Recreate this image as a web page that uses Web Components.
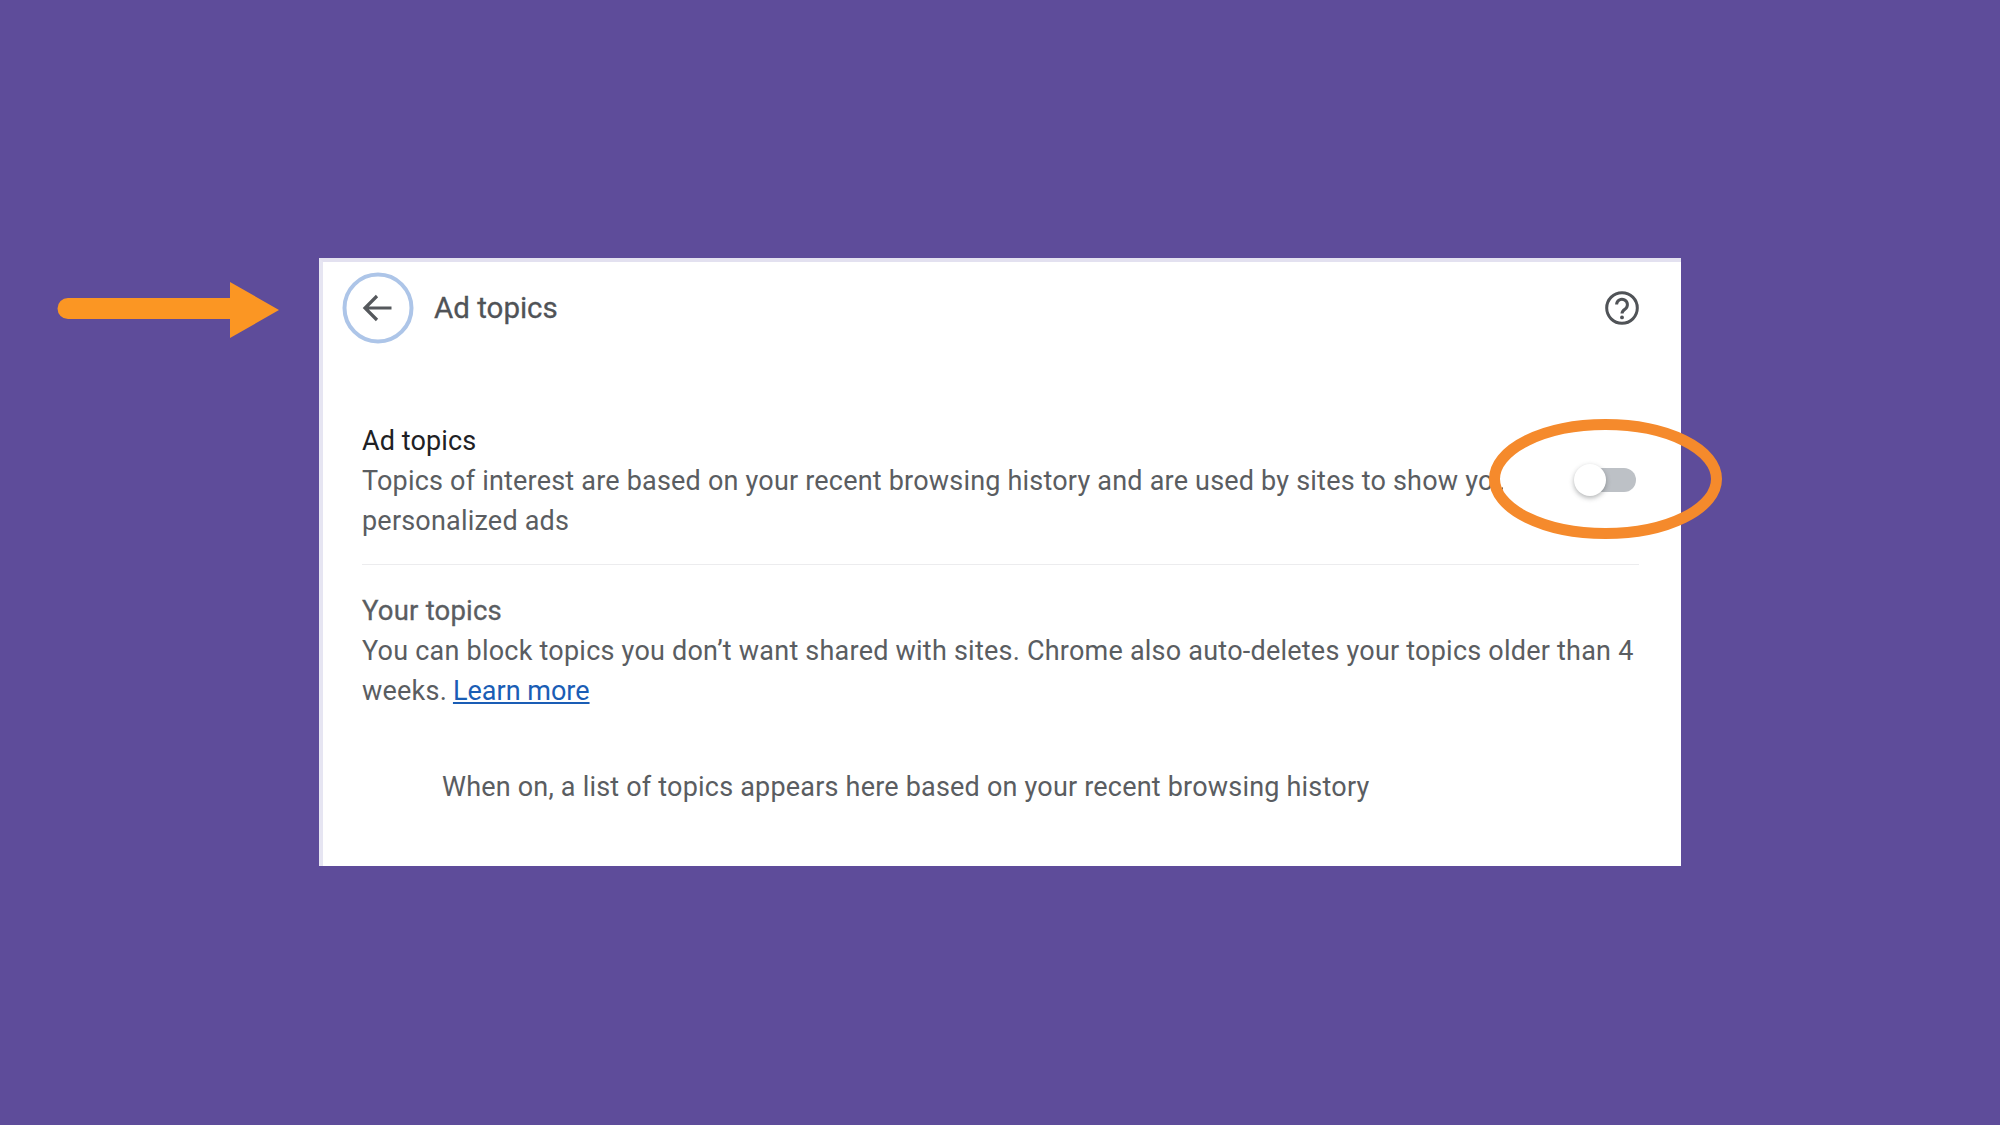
<!DOCTYPE html>
<html lang="en">
<head>
<meta charset="utf-8">
<title>Ad topics</title>
<style>
  html, body { margin: 0; height: 100%; }
  body {
    width: 2000px;
    height: 1125px;
    background: #5e4c9a;
    font-family: Roboto, "Liberation Sans", sans-serif;
    overflow: hidden;
    position: relative;
    display: flex;
    padding: 258px 0 0 319px;
    box-sizing: border-box;
  }
  a-arrow { position: absolute; left: 57px; top: 282px; }
  a-ring { position: absolute; left: 1489px; top: 419px; }
</style>
</head>
<body>
  <topics-card>
    <topics-header slot="header">Ad topics</topics-header>
    <setting-row>
      <span slot="title">Ad topics</span>
      Topics of interest are based on your recent browsing history and are used by sites to show you personalized ads
    </setting-row>
    <topics-section>
      <span slot="title">Your topics</span>
      You can block topics you don’t want shared with sites. Chrome also auto-deletes your topics older than 4 weeks. <a href="#">Learn more</a>
      <span slot="empty">When on, a list of topics appears here based on your recent browsing history</span>
    </topics-section>
  </topics-card>
  <a-arrow></a-arrow>
  <a-ring></a-ring>
<script>
class TopicsCard extends HTMLElement {
  constructor() {
    super();
    this.attachShadow({ mode: "open" }).innerHTML = `
      <style>
        :host {
          display: flex;
          flex-direction: column;
          width: 1362px;
          height: 608px;
          box-sizing: border-box;
          background: #fff;
          border-top: 4px solid #e3e1f0;
          border-left: 4px solid #e6e5f2;
        }
      </style>
      <slot name="header"></slot>
      <slot></slot>`;
  }
}

class TopicsHeader extends HTMLElement {
  constructor() {
    super();
    this.attachShadow({ mode: "open" }).innerHTML = `
      <style>
        :host {
          display: flex;
          align-items: center;
          height: 92px;
          padding: 0 42px 0 19px;
          color: #505357;
          font-size: 29.500px;
          font-weight: 400;
          -webkit-text-stroke: 0.3px #505357;
        }
        .back {
          width: 72px;
          height: 72px;
          margin-right: 20px;
          flex: none;
        }
        .title { flex: 1; }
        .help { width: 34px; height: 34px; flex: none; }
      </style>
      <svg class="back" viewBox="0 0 72 72" fill="none">
        <circle cx="36" cy="36" r="33.500" stroke="#adc5e8" stroke-width="4"/>
        <path d="M49.500 36H23.500M35 24L23 36L35 48" stroke="#55585c" stroke-width="3.200"/>
      </svg>
      <span class="title"><slot></slot></span>
      <svg class="help" viewBox="0 0 34 34" fill="none">
        <circle cx="17" cy="17" r="15.300" stroke="#505357" stroke-width="3"/>
        <path d="M11.600 13.600a5.400 5.400 0 1 1 8.600 4.400c-2 1.400-3.200 2.300-3.200 4.600" stroke="#505357" stroke-width="3"/>
        <circle cx="17" cy="26.400" r="1.900" fill="#505357"/>
      </svg>`;
  }
}

class SettingRow extends HTMLElement {
  constructor() {
    super();
    this.attachShadow({ mode: "open" }).innerHTML = `
      <style>
        :host {
          display: flex;
          margin: 67px 42px 0 39px;
          padding-bottom: 23px;
          height: 120px;
          border-bottom: 1px solid #ececee;
          font-size: 27px;
          line-height: 40px;
          letter-spacing: 0.2px;
          color: #5a5d61;
        }
        /* the description runs under the toggle column and gets cut off */
        .text { width: 1141px; overflow: hidden; flex: none; }
        .inner { width: 1180px; }
        .title { color: #202124; letter-spacing: 0.1px; }
        toggle-switch { margin: 47px 0 0 71px; }
      </style>
      <div class="text">
        <div class="inner">
          <div class="title"><slot name="title"></slot></div>
          <slot></slot>
        </div>
      </div>
      <toggle-switch></toggle-switch>`;
  }
}

class TopicsSection extends HTMLElement {
  constructor() {
    super();
    this.attachShadow({ mode: "open" }).innerHTML = `
      <style>
        :host {
          display: block;
          margin: 26px 38px 0 39px;
          font-size: 27px;
          line-height: 40px;
          letter-spacing: 0.225px;
          color: #5a5d61;
        }
        .title { font-size: 27.500px; letter-spacing: 0.2px; -webkit-text-stroke: 0.3px #5a5d61; }
        .empty { margin: 56px 0 0 80px; letter-spacing: 0.2px; }
        ::slotted(a) { color: #1a5db5; text-decoration: underline; letter-spacing: 0; margin-left: -1px; }
      </style>
      <div class="title"><slot name="title"></slot></div>
      <div><slot></slot></div>
      <div class="empty"><slot name="empty"></slot></div>`;
  }
}

class ToggleSwitch extends HTMLElement {
  constructor() {
    super();
    this.attachShadow({ mode: "open" }).innerHTML = `
      <style>
        :host {
          display: block;
          width: 62px;
          height: 24px;
          position: relative;
        }
        .track {
          position: absolute;
          left: 16px; right: 0; top: 0; bottom: 0;
          background: #bdc1c6;
          border-radius: 12px;
        }
        .knob {
          position: absolute;
          left: 0;
          top: -4px;
          width: 32px;
          height: 32px;
          border-radius: 50%;
          background: #fff;
          box-shadow: 0 2px 5px rgba(60, 64, 67, .4);
        }
      </style>
      <div class="track"></div>
      <div class="knob"></div>`;
  }
}

class AArrow extends HTMLElement {
  constructor() {
    super();
    this.attachShadow({ mode: "open" }).innerHTML = `
      <style>:host { display: block; width: 222px; height: 56px; } svg { display: block; }</style>
      <svg width="222" height="56" viewBox="0 0 222 56">
        <path d="M11 16H173V0L222 28L173 56V37H11A10.500 10.500 0 0 1 11 16Z" fill="#fb9623"/>
      </svg>`;
  }
}

class ARing extends HTMLElement {
  constructor() {
    super();
    this.attachShadow({ mode: "open" }).innerHTML = `
      <style>:host { display: block; width: 233px; height: 120px; } svg { display: block; }</style>
      <svg width="233" height="120" viewBox="0 0 233 120" fill="none">
        <ellipse cx="116.500" cy="60" rx="111" ry="54.500" stroke="#f58a2c" stroke-width="11"/>
      </svg>`;
  }
}

customElements.define("topics-card", TopicsCard);
customElements.define("topics-header", TopicsHeader);
customElements.define("setting-row", SettingRow);
customElements.define("topics-section", TopicsSection);
customElements.define("toggle-switch", ToggleSwitch);
customElements.define("a-arrow", AArrow);
customElements.define("a-ring", ARing);
</script>
</body>
</html>
